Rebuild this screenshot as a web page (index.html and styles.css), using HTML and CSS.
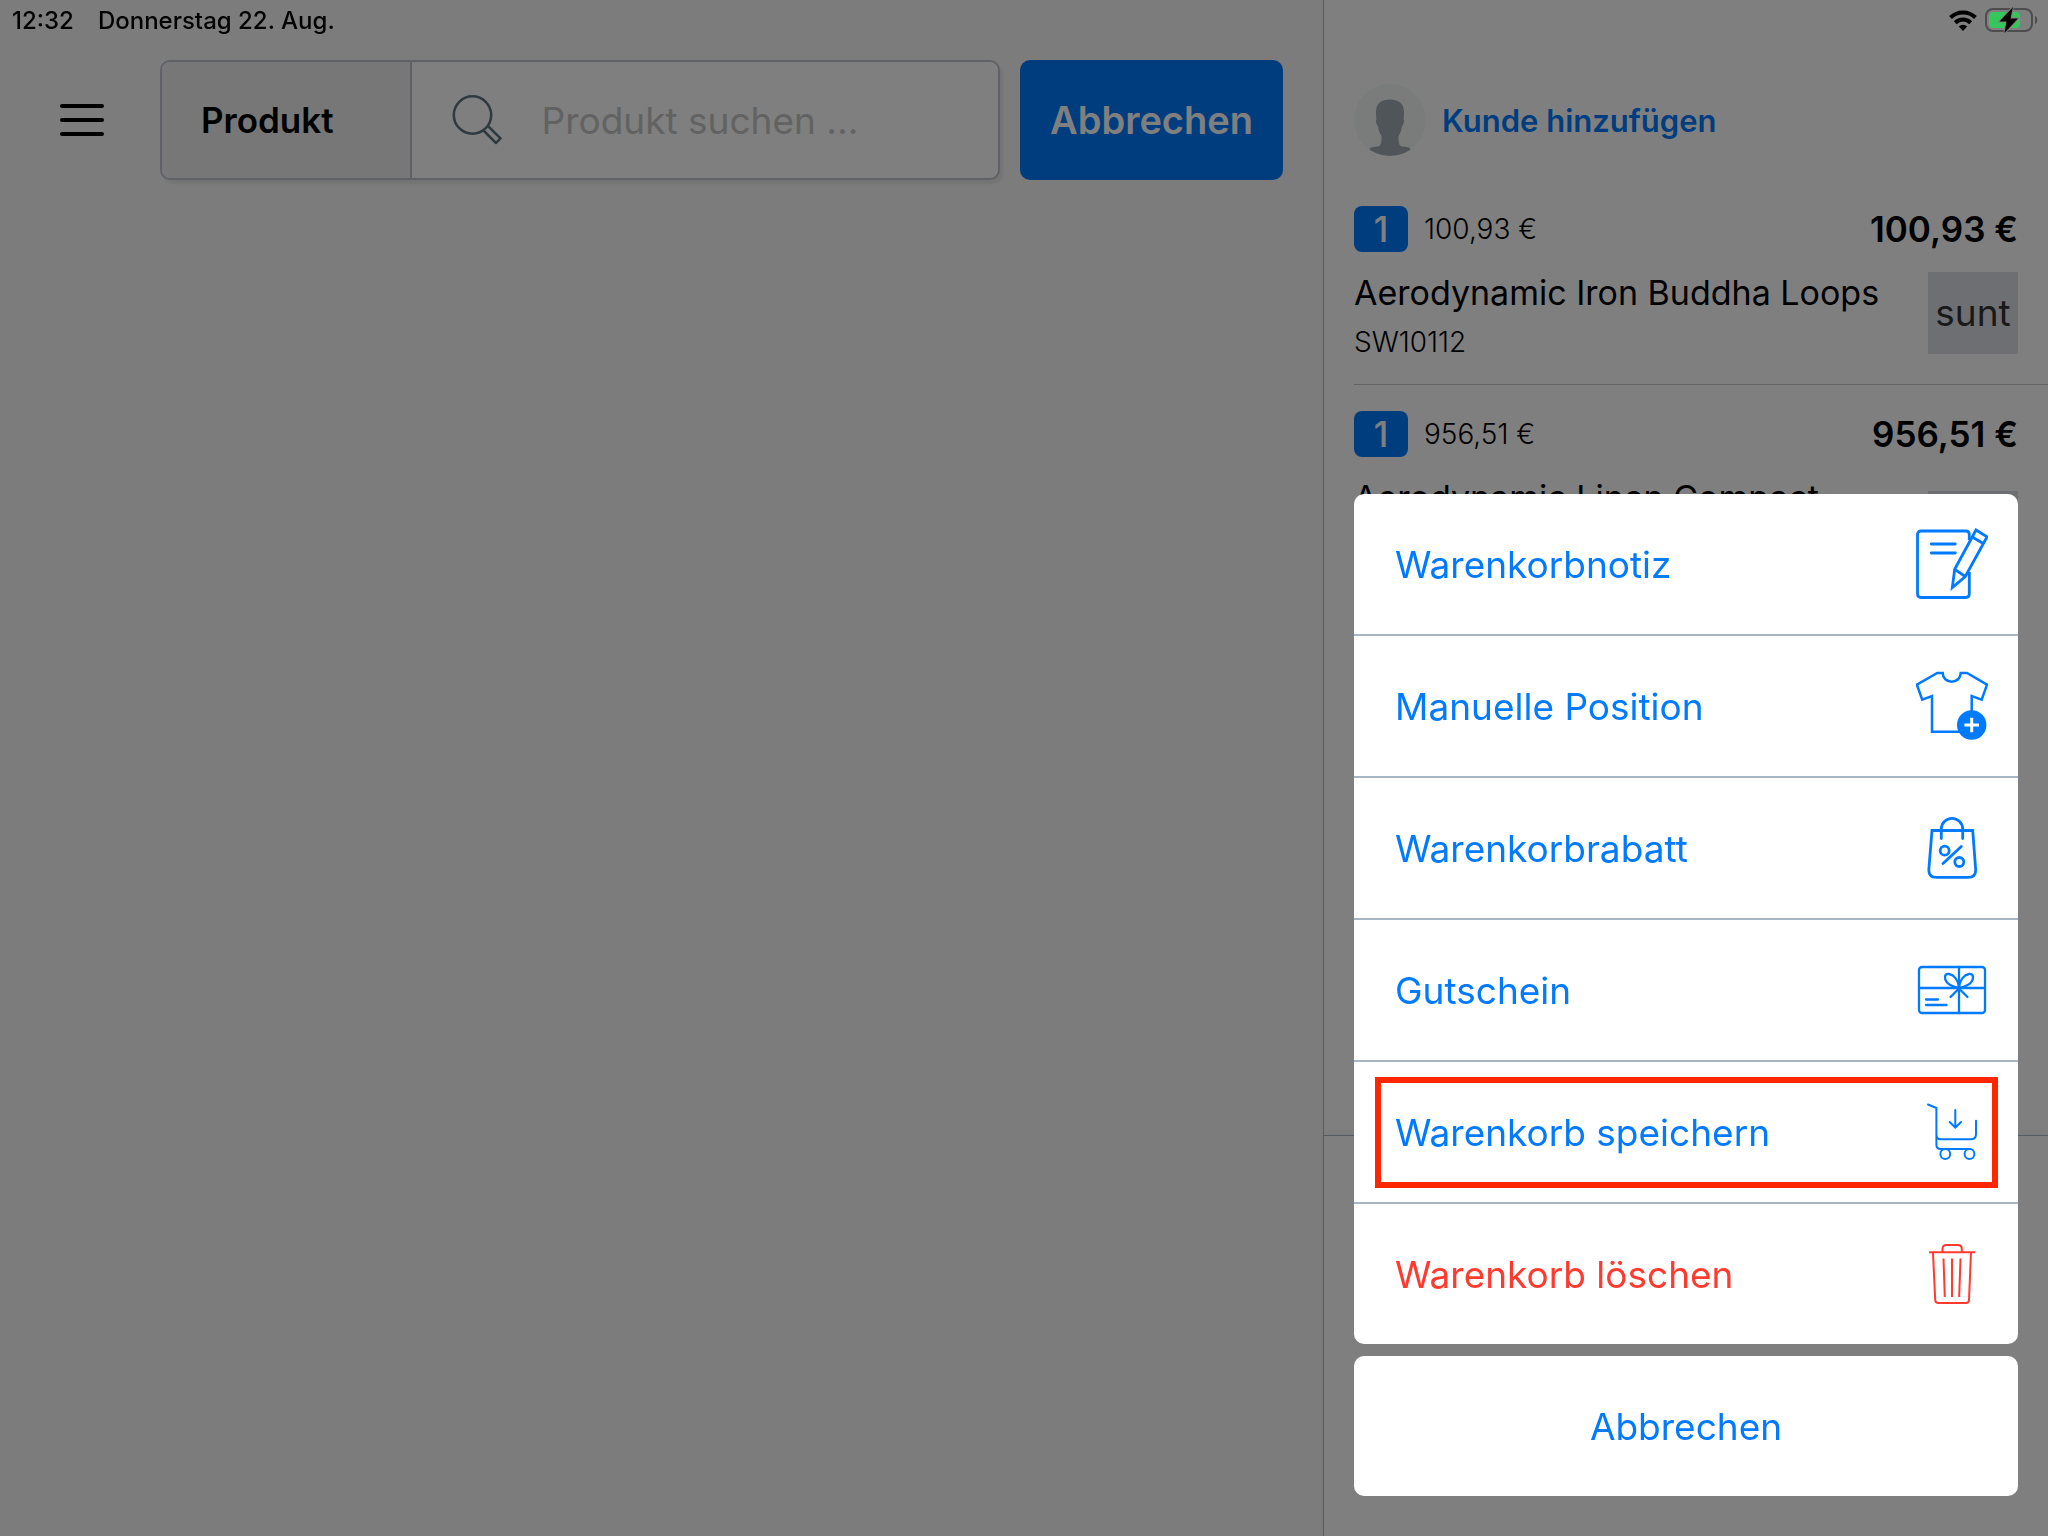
FILE: index.html
```html
<!DOCTYPE html>
<html lang="de">
<head>
    <meta charset="UTF-8">
    <meta name="viewport" content="width=device-width, initial-scale=1.0">
    <title>Warenkorb</title>
    <link rel="stylesheet" href="styles.css">
</head>
<body>
    <div class="status-bar">
        <span>12:32</span>
        <span>Donnerstag 22. Aug.</span>
        <span class="status-icons">
            <svg width="28" height="21" viewBox="0 0 28 21" aria-hidden="true">
                <g fill="none" stroke="#000" stroke-width="4">
                    <path d="M1.5 7.5a18 18 0 0 1 25 0"/>
                    <path d="M6.3 12.7a11 11 0 0 1 15.4 0"/>
                </g>
                <path d="M14 21l-4.2-4.6a6 6 0 0 1 8.4 0z"/>
            </svg>
            <svg width="54" height="26" viewBox="0 0 54 26" aria-hidden="true">
                <rect x="1" y="2" width="46" height="22" rx="7" fill="none" stroke="#4d4d4d" stroke-width="2"/>
                <path d="M50 9c3 1 3 7 0 8z" fill="#4d4d4d"/>
                <rect x="4" y="5" width="31" height="16" rx="4" fill="#34c759"/>
                <path d="M28 0L14.5 14.5h7L19.5 26 33 11.5h-7.5z" fill="#000" stroke="#808080" stroke-width="2" paint-order="stroke"/>
            </svg>
        </span>
    </div>

    <div class="app">
        <main class="main">
            <header class="toolbar">
                <button class="menu-button" aria-label="Menü"><span></span><span></span><span></span></button>
                <div class="search">
                    <button class="search-type">Produkt</button>
                    <label class="search-field">
                        <svg width="50" height="50" viewBox="0 0 50 50" fill="none" stroke="#5f7480" stroke-width="2.5" aria-hidden="true">
                            <circle cx="20.5" cy="20" r="18.7"/>
                            <path d="M31 35L44 48l4.5-4.7L35.5 30.5" stroke-linejoin="round"/>
                        </svg>
                        <input type="text" placeholder="Produkt suchen ..." aria-label="Produkt suchen">
                    </label>
                </div>
                <button class="cancel-search">Abbrechen</button>
            </header>
        </main>

        <aside class="cart">
            <a class="customer" href="#">
                <svg width="72" height="72" viewBox="0 0 72 72" aria-hidden="true">
                    <clipPath id="avatar"><circle cx="36" cy="36" r="36"/></clipPath>
                    <circle cx="36" cy="36" r="36" fill="#f4f9f8"/>
                    <path clip-path="url(#avatar)" fill="#a0abb2" d="M36 15.5c8.5 0 14 4 14 12 0 3 0 5-.5 7.500 1.500 1 0 6-1.500 7-.5 4-1.500 7-3.500 10 0 6 0 10 4 10.500 4 .5 7 .5 8 2.500V72h-41v-7c1-2 4-2 8-2.500 4-.5 4-4.500 4-10.500-2-3-3-6-3.500-10-1.500-1-3-6-1.500-7-.5-2.500-.5-4.500-.5-7.500 0-8 5.500-12 14-12z"/>
                </svg>
                <span>Kunde hinzufügen</span>
            </a>

            <ul class="items">
                <li class="item">
                    <div class="item-head">
                        <span class="quantity">1</span>
                        <span class="unit-price">100,93 €</span>
                        <strong class="total">100,93 €</strong>
                    </div>
                    <div class="item-body">
                        <div>
                            <div class="item-name">Aerodynamic Iron Buddha Loops</div>
                            <div class="item-number">SW10112</div>
                        </div>
                        <div class="thumb">sunt</div>
                    </div>
                </li>
                <li class="item">
                    <div class="item-head">
                        <span class="quantity">1</span>
                        <span class="unit-price">956,51 €</span>
                        <strong class="total">956,51 €</strong>
                    </div>
                    <div class="item-body item-body-tall">
                        <div>
                            <div class="item-name">Aerodynamic Linen Compact</div>
                        </div>
                        <div class="thumb"></div>
                    </div>
                </li>
            </ul>

            <footer class="cart-footer"></footer>
        </aside>
    </div>

    <div class="overlay">
        <div class="sheet" role="dialog" aria-label="Warenkorb">
            <div class="sheet-group">
                <button class="action">
                    <span>Warenkorbnotiz</span>
                    <svg class="icon" viewBox="0 0 72 72" stroke-width="2.8" aria-hidden="true">
                        <path d="M53.3 44v22q0 3.500-3.500 3.500H5q-3.500 0-3.500-3.500V6.500Q1.500 3 5 3h44.800q3.500 0 3.500 3.500V12"/>
                        <path d="M15.300 16h24M15.300 25h24" stroke-linecap="round"/>
                        <path d="M60 2l11 6.800-21.700 39.700L36.300 59.500l2.400-18.200zM56.300 9l10.900 6.500M38.700 41.300l10.600 7.200"/>
                    </svg>
                </button>
                <button class="action">
                    <span>Manuelle Position</span>
                    <svg class="icon" viewBox="0 0 72 72" stroke-width="2.5" aria-hidden="true">
                        <path d="M55.700 42V26l10 3.700 5.300-15L51 3h-6.300c0 5-4 8.700-9 8.700s-9-3.700-9-8.700h-5.400L.9 14.700l5.300 15L16 26v35.700h28"/>
                        <circle cx="55.7" cy="55" r="14.7" fill="currentColor" stroke="none"/>
                        <path d="M48.400 55H63M55.700 47.700v14.600" stroke="#fff" stroke-width="3"/>
                    </svg>
                </button>
                <button class="action">
                    <span>Warenkorbrabatt</span>
                    <svg class="icon" viewBox="0 0 72 72" stroke-width="2.8" stroke-linecap="round" aria-hidden="true">
                        <path d="M16 18.500h40.700l3 39.500q0 7.400-7.700 7.400H20.500q-7.700 0-7.700-7.400z"/>
                        <path d="M25.300 26.500V17a10.700 10.700 0 0 1 21.400 0v9.500"/>
                        <circle cx="28.7" cy="38.7" r="4.5"/>
                        <circle cx="43.3" cy="50" r="4.5"/>
                        <path d="M45.300 34.500L27 51.500"/>
                    </svg>
                </button>
                <button class="action">
                    <span>Gutschein</span>
                    <svg class="icon" viewBox="0 0 72 72" stroke-width="2.3" stroke-linecap="round" aria-hidden="true">
                        <rect x="3" y="13" width="66" height="46" rx="3"/>
                        <path d="M3 34h66M43 13v46M10 45.500h12M10 51h20.500"/>
                        <path d="M43 33c-1-7-5-12-10-13-5-.5-5 5-2 8.500 3 3 7 4.500 12 5.500M43 33c1-7 5-12 10-13 5-.5 5 5 2 8.500-3 3-7 4.500-12 5.500M43 34.500l-8.500 8.500M43 34.500l8.500 8.500"/>
                    </svg>
                </button>
                <button class="action highlighted">
                    <span>Warenkorb speichern</span>
                    <svg class="icon" viewBox="0 0 72 72" stroke-width="2" stroke-linecap="round" aria-hidden="true">
                        <path d="M12 8.500l8.400 3.500v37q0 4 4.300 4h29M20.400 38q0 5.300 4 5.300h30.300q5.300 0 5.300-5.300V24.700"/>
                        <path d="M39.300 14v17.500M33.700 26l5.600 5.700L45 26"/>
                        <circle cx="29.3" cy="58" r="4.9"/>
                        <circle cx="53.5" cy="58" r="4.9"/>
                    </svg>
                </button>
                <button class="action danger">
                    <span>Warenkorb löschen</span>
                    <svg class="icon" viewBox="0 0 72 72" stroke-width="2" aria-hidden="true">
                        <path d="M13 14.300h46M26.500 14v-3q0-4 4-4h11.300q4 0 4 4v3"/>
                        <path d="M17 14.500l2.200 47.500q.2 3 3.200 3h27.400q3 0 3.200-3L55 14.500M27.500 20.500l1.300 38.500M36 20.500V59M44.500 20.500L43.200 59"/>
                    </svg>
                </button>
            </div>
            <div class="sheet-group">
                <button class="action centered">Abbrechen</button>
            </div>
        </div>
    </div>
</body>
</html>
```
FILE: styles.css
```css
* {
    box-sizing: border-box;
}
body {
    margin: 0;
    font-family: Inter, "Liberation Sans", sans-serif;
    color: #000;
}
button {
    border: none;
    background: none;
    padding: 0;
    font-family: inherit;
    cursor: pointer;
}

/* status bar, stays above the dimmed page */
.status-bar {
    position: fixed;
    top: 0;
    left: 0;
    right: 0;
    z-index: 2;
    display: flex;
    align-items: center;
    gap: 24px;
    height: 40px;
    padding: 0 9px 0 12px;
    font-size: 24px;
    font-weight: 500;
}
.status-icons {
    display: flex;
    align-items: center;
    gap: 8px;
    margin-left: auto;
}

.app {
    display: flex;
    height: 100vh;
    overflow: hidden;
}
.main {
    flex: 1;
    min-width: 0;
    background: #f8f8f8;
}

/* toolbar */
.toolbar {
    display: flex;
    align-items: center;
    padding: 60px 40px 0 60px;
}
.menu-button {
    display: flex;
    flex-direction: column;
    gap: 10px;
    width: 44px;
    margin-right: 56px;
}
.menu-button span {
    height: 4px;
    border-radius: 2px;
    background: #000;
}
.search {
    flex: 1;
    display: flex;
    min-width: 0;
    height: 120px;
    margin-right: 20px;
    border: 2px solid #bcc5cd;
    border-radius: 10px;
    background: #fff;
    box-shadow: 3px 4px 2px rgba(0, 0, 0, 0.06);
    overflow: hidden;
}
.search-type {
    padding: 0 76px 0 39px;
    border-right: 2px solid #bcc5cd;
    background: #eee;
    color: #000;
    font-size: 35px;
    font-weight: 600;
}
.search-field {
    flex: 1;
    display: flex;
    align-items: center;
    gap: 40px;
    min-width: 0;
    padding-left: 40px;
}
.search-field svg {
    flex-shrink: 0;
}
.search-field input {
    flex: 1;
    min-width: 0;
    padding: 0;
    border: none;
    outline: none;
    background: none;
    font-family: inherit;
    font-size: 37px;
}
.search-field input::placeholder {
    color: #c4c4c4;
}
.cancel-search {
    height: 120px;
    padding: 0 30px;
    border-radius: 10px;
    background: #007aff;
    color: #fff;
    font-size: 38px;
    font-weight: 600;
}

/* cart */
.cart {
    display: flex;
    flex-direction: column;
    flex-shrink: 0;
    width: 725px;
    border-left: 1px solid #a8b7c5;
    background: #fff;
}
.customer {
    display: flex;
    align-items: center;
    gap: 16px;
    padding: 84px 30px 50px;
    color: #007aff;
    font-size: 31px;
    font-weight: 600;
    text-decoration: none;
}
.items {
    flex: 1;
    margin: 0;
    padding: 0 0 0 30px;
    list-style: none;
    overflow: hidden;
}
.item {
    padding: 0 30px 27px 0;
    margin-bottom: 26px;
    border-bottom: 1px solid #c8c7cc;
}
.item:last-child {
    border-bottom: none;
}
.item-head {
    display: flex;
    align-items: center;
    gap: 16px;
    margin-bottom: 20px;
}
.quantity {
    width: 54px;
    border-radius: 8px;
    background: #007aff;
    color: #fff;
    font-size: 35px;
    font-weight: 500;
    line-height: 46px;
    text-align: center;
}
.unit-price {
    font-size: 28px;
    font-weight: 300;
}
.total {
    margin-left: auto;
    font-size: 35px;
    font-weight: 600;
}
.item-body {
    display: flex;
    align-items: flex-start;
    justify-content: space-between;
}
.item-body-tall .thumb {
    margin-top: 14px;
}
.item-name {
    font-size: 34px;
    line-height: 42px;
}
.item-number {
    margin-top: 13px;
    font-size: 28px;
    font-weight: 300;
    line-height: 30px;
}
.thumb {
    flex-shrink: 0;
    width: 90px;
    height: 82px;
    background: #dddee6;
    color: #333;
    font-size: 37px;
    line-height: 82px;
    text-align: center;
}
.cart-footer {
    height: 401px;
    border-top: 1px solid #a8b7c5;
    box-shadow: 0 -4px 8px rgba(0, 0, 0, 0.04);
}

/* action sheet */
.overlay {
    position: fixed;
    inset: 0;
    z-index: 1;
    display: flex;
    align-items: flex-end;
    justify-content: flex-end;
    padding: 0 30px 40px;
    background: rgba(0, 0, 0, 0.5);
}
.sheet {
    display: flex;
    flex-direction: column;
    gap: 12px;
    width: 664px;
}
.sheet-group {
    border-radius: 10px;
    background: #fff;
    overflow: hidden;
}
.action {
    position: relative;
    display: flex;
    align-items: center;
    justify-content: space-between;
    width: 100%;
    height: 140px;
    padding: 0 30px 0 41px;
    color: #007aff;
    font-size: 37px;
}
.action + .action {
    height: 142px;
    border-top: 2px solid #a8b7c5;
}
.centered {
    justify-content: center;
    padding: 0;
}
.danger {
    color: #ff3b30;
}
.highlighted::after {
    content: "";
    position: absolute;
    inset: 15px 20px 14px 21px;
    border: 6px solid #ff2600;
}
.icon {
    width: 72px;
    height: 72px;
    fill: none;
    stroke: currentColor;
}
```
